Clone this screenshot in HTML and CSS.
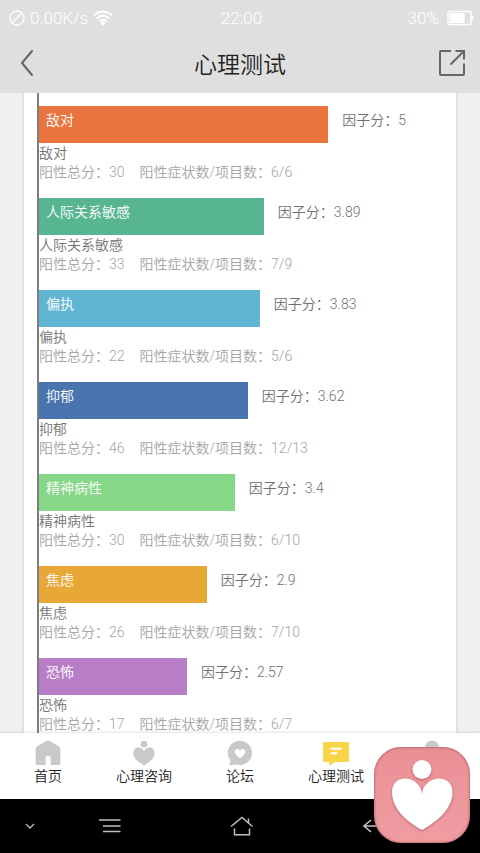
FILE: index.html
```html
<!DOCTYPE html>
<html lang="zh-CN">

<head>
  <meta charset="UTF-8">
  <meta name="viewport" content="width=device-width, initial-scale=1.0">
  <title>心理测试</title>
  <link rel="stylesheet" href="styles.css">
</head>

<body>
  <div class="status-bar">
    <div class="status-left">
      <svg width="16" height="16" viewBox="0 0 16 16" fill="none" stroke="#fff" stroke-width="1.3">
        <circle cx="8" cy="8" r="7" />
        <path d="M4 12L12 4" />
      </svg>
      <span>0.00K/s</span>
      <svg width="20" height="16" viewBox="0 0 20 16" fill="none" stroke="#fff" stroke-width="2">
        <path d="M1 5.2Q10 -2.2 19 5.2" />
        <path d="M3.7 8.4Q10 2.8 16.3 8.4" />
        <path d="M6.4 11.2Q10 8 13.6 11.2" />
        <circle cx="10" cy="13.4" r="2.1" fill="#fff" stroke="none" />
      </svg>
    </div>
    <div class="status-time">22:00</div>
    <div class="status-right">
      <span>30%</span>
      <svg width="27" height="16" viewBox="0 0 27 16">
        <rect x="1" y="1.5" width="23" height="13" rx="1" fill="none" stroke="#fff" stroke-width="1.4" />
        <rect x="2.5" y="3" width="15" height="10" fill="#fff" />
        <path d="M24.5 5.5h1.8v5h-1.8z" fill="#fff" />
      </svg>
    </div>
  </div>

  <header class="header">
    <button class="header-btn" aria-label="返回">
      <svg width="14" height="28" viewBox="0 0 14 28" fill="none" stroke="#666" stroke-width="2" stroke-linecap="round" stroke-linejoin="round">
        <path d="M12 2L2 14L12 26" />
      </svg>
    </button>
    <h1 class="header-title">心理测试</h1>
    <button class="header-btn header-share" aria-label="分享">
      <svg width="28" height="28" viewBox="0 0 28 28" fill="none" stroke="#666" stroke-width="2">
        <path d="M13 2H3Q2 2 2 3V25Q2 26 3 26H25Q26 26 26 25V14.5" />
        <path d="M17.5 2H26V10.5M26 2L12.5 15.5" />
      </svg>
    </button>
  </header>

  <main class="content">
    <section class="card">
      <div class="chart">
        <div class="factor">
          <div class="factor-row">
            <div class="bar bar-orange" style="width: 71.8%">敌对</div>
            <div class="score">因子分：5</div>
          </div>
          <div class="factor-name">敌对</div>
          <div class="factor-meta"><span>阳性总分：30</span><span>阳性症状数/项目数：6/6</span></div>
        </div>
        <div class="factor">
          <div class="factor-row">
            <div class="bar bar-teal" style="width: 55.8%">人际关系敏感</div>
            <div class="score">因子分：3.89</div>
          </div>
          <div class="factor-name">人际关系敏感</div>
          <div class="factor-meta"><span>阳性总分：33</span><span>阳性症状数/项目数：7/9</span></div>
        </div>
        <div class="factor">
          <div class="factor-row">
            <div class="bar bar-sky" style="width: 54.8%">偏执</div>
            <div class="score">因子分：3.83</div>
          </div>
          <div class="factor-name">偏执</div>
          <div class="factor-meta"><span>阳性总分：22</span><span>阳性症状数/项目数：5/6</span></div>
        </div>
        <div class="factor">
          <div class="factor-row">
            <div class="bar bar-blue" style="width: 51.8%">抑郁</div>
            <div class="score">因子分：3.62</div>
          </div>
          <div class="factor-name">抑郁</div>
          <div class="factor-meta"><span>阳性总分：46</span><span>阳性症状数/项目数：12/13</span></div>
        </div>
        <div class="factor">
          <div class="factor-row">
            <div class="bar bar-green" style="width: 48.6%">精神病性</div>
            <div class="score">因子分：3.4</div>
          </div>
          <div class="factor-name">精神病性</div>
          <div class="factor-meta"><span>阳性总分：30</span><span>阳性症状数/项目数：6/10</span></div>
        </div>
        <div class="factor">
          <div class="factor-row">
            <div class="bar bar-amber" style="width: 41.6%">焦虑</div>
            <div class="score">因子分：2.9</div>
          </div>
          <div class="factor-name">焦虑</div>
          <div class="factor-meta"><span>阳性总分：26</span><span>阳性症状数/项目数：7/10</span></div>
        </div>
        <div class="factor">
          <div class="factor-row">
            <div class="bar bar-purple" style="width: 36.7%">恐怖</div>
            <div class="score">因子分：2.57</div>
          </div>
          <div class="factor-name">恐怖</div>
          <div class="factor-meta"><span>阳性总分：17</span><span>阳性症状数/项目数：6/7</span></div>
        </div>
      </div>
    </section>
  </main>

  <nav class="tabs">
    <a class="tab" href="#home">
      <svg width="26" height="26" viewBox="0 0 26 26" fill="#c9c9c9">
        <path d="M11.6 .8Q13 0 14.4 .8L24 6.6Q25.3 7.4 25.3 9V23.5Q25.3 25 23.8 25H15.6V17Q15.6 16 14.6 16H11.6Q10.6 16 10.6 17V25H2.2Q.7 25 .7 23.5V9Q.7 7.4 2 6.6Z" />
      </svg>
      <span>首页</span>
    </a>
    <a class="tab" href="#consult">
      <svg width="26" height="26" viewBox="0 0 26 26" fill="#c9c9c9">
        <circle cx="13" cy="4.2" r="3.4" />
        <path d="M13 11.5C11.5 6.5 2.4 5.6 2.4 13.2C2.4 19 8.3 22.5 13 25.5C17.7 22.5 23.6 19 23.6 13.2C23.6 5.6 14.5 6.5 13 11.5Z" />
      </svg>
      <span>心理咨询</span>
    </a>
    <a class="tab" href="#forum">
      <svg width="26" height="26" viewBox="0 0 26 26">
        <path d="M13 .7A12.2 12.2 0 1 1 9 24.5L2 25.2L3.5 20.5A12.2 12.2 0 0 1 13 .7Z" fill="#c9c9c9" />
        <path d="M13 18.3C10 16 7.8 14.2 7.8 11.7C7.8 8.7 11.7 8.2 13 10.7C14.3 8.2 18.2 8.7 18.2 11.7C18.2 14.2 16 16 13 18.3Z" fill="#fff" />
      </svg>
      <span>论坛</span>
    </a>
    <a class="tab" href="#test">
      <svg width="26" height="26" viewBox="0 0 26 26">
        <path d="M1.7 2H24.3Q26 2 26 3.7V20.3Q26 22 24.3 22H12L7 25.4Q6.2 25.8 6.2 25V22H1.7Q0 22 0 20.3V3.7Q0 2 1.7 2Z" fill="#f8d648" />
        <path d="M8.5 8.7H17.8M8.5 13.2H13.5" stroke="#fff" stroke-width="2" stroke-linecap="round" />
      </svg>
      <span>心理测试</span>
    </a>
    <a class="tab" href="#mine" aria-label="我的">
      <svg width="26" height="26" viewBox="0 0 26 26" fill="#c9c9c9">
        <circle cx="13" cy="7.5" r="7" />
        <path d="M1 25Q2 16 13 16T25 25Z" />
      </svg>
    </a>
  </nav>

  <div class="system-nav">
    <button class="system-btn system-hide" aria-label="收起">
      <svg width="10" height="8" viewBox="0 0 10 8" fill="none" stroke="#c0c0c0" stroke-width="1.3">
        <path d="M1 2L5 6L9 2" />
      </svg>
    </button>
    <button class="system-btn" aria-label="菜单">
      <svg width="22" height="16" viewBox="0 0 22 16" fill="none" stroke="#c0c0c0" stroke-width="1.5">
        <path d="M0 2H21.5M4 8H21.5M4 13.5H21.5" />
      </svg>
    </button>
    <button class="system-btn" aria-label="主页">
      <svg width="24" height="20" viewBox="0 0 24 20" fill="none" stroke="#c0c0c0" stroke-width="1.5">
        <path d="M1 10.5L12 1.5L22.5 10.5M18.5 6.5V2.5M4.5 12.5V18.7H19.5V12.5" />
      </svg>
    </button>
    <button class="system-btn" aria-label="后退">
      <svg width="22" height="16" viewBox="0 0 22 16" fill="none" stroke="#c0c0c0" stroke-width="1.5">
        <path d="M8 2L1 8L8 14M1 8H21" />
      </svg>
    </button>
  </div>

  <button class="float-btn" aria-label="心理咨询">
    <svg width="96" height="96" viewBox="0 0 96 96">
      <g class="float-shape" fill="#fff">
        <circle cx="48" cy="22.5" r="9.5" />
        <path d="M48 47C47.5 38 39.5 31.5 31 31.5C23 31.5 18 37 18 45C18 62 33 75 48 83C63 75 78.5 62 78.5 45C78.5 37 73 31.5 65 31.5C56.5 31.5 48.5 38 48 47Z" />
      </g>
    </svg>
  </button>
</body>

</html>
```
FILE: styles.css
```css
* {
  margin: 0;
  padding: 0;
  box-sizing: border-box;
}

body {
  font-family: Roboto, "Noto Sans CJK SC", sans-serif;
  font-size: 14px;
  height: 100vh;
  display: flex;
  flex-direction: column;
  overflow: hidden;
  background: #f0f0f3;
}

svg {
  display: block;
}

button {
  background: none;
  border: none;
  font: inherit;
  cursor: pointer;
}

.status-bar {
  display: grid;
  grid-template-columns: 1fr auto 1fr;
  align-items: center;
  height: 36px;
  padding: 0 6px 0 9px;
  background: #dfdfdf;
  color: #fff;
  font-size: 17px;
  font-weight: 300;
}

.status-left,
.status-right {
  display: flex;
  align-items: center;
  gap: 5px;
}

.status-right {
  gap: 8px;
  justify-content: flex-end;
}

.header {
  display: flex;
  align-items: center;
  justify-content: space-between;
  height: 57px;
  padding: 0 14px 4px;
  background: #dfdfdf;
}

.header-btn {
  display: flex;
  align-items: center;
  width: 40px;
  height: 40px;
  padding-left: 6px;
}

.header-share {
  justify-content: flex-end;
  padding-left: 0;
}

.header-title {
  font-size: 23px;
  font-weight: 350;
  color: #222;
}

.content {
  flex: 1;
  min-height: 0;
  overflow: hidden;
  padding: 0 24px;
}

.card {
  padding: 0 14px 0 13px;
  background: #fff;
  box-shadow: 0 0 3px rgba(0, 0, 0, 0.2);
  font-weight: 350;
}

.chart {
  padding-top: 13px;
  border-left: 2px solid #7d7d7d;
}

.factor {
  margin-bottom: 17px;
}

.factor-row {
  display: flex;
  gap: 14px;
  height: 37px;
  line-height: 18px;
}

.bar {
  padding: 5px 7px;
  color: #fff;
}

.score {
  padding-top: 5px;
  color: #707070;
}

.bar-orange {
  background: #eb733e;
}

.bar-teal {
  background: #57b592;
}

.bar-sky {
  background: #60b5d3;
}

.bar-blue {
  background: #4a74ad;
}

.bar-green {
  background: #86d788;
}

.bar-amber {
  background: #e8a838;
}

.bar-purple {
  background: #b77dc7;
}

.factor-name {
  line-height: 20px;
  color: #747474;
}

.factor-meta {
  display: flex;
  gap: 15px;
  line-height: 18px;
  color: #a4a4a4;
}

.tabs {
  display: flex;
  height: 66px;
  background: #fff;
  box-shadow: 0 0 3px rgba(0, 0, 0, 0.2);
  position: relative;
  font-weight: 350;
}

.tab {
  flex: 1;
  display: flex;
  flex-direction: column;
  align-items: center;
  padding-top: 7px;
  line-height: 20px;
  color: #222;
  text-decoration: none;
}

.system-nav {
  display: grid;
  grid-template-columns: 44px 1fr 1fr 1fr 40px;
  height: 54px;
  background: #000;
}

.system-btn {
  display: flex;
  align-items: center;
  justify-content: center;
}

.system-hide {
  padding-left: 15px;
}

/* floating consult button, sits over the tab bar and system nav */
.float-btn {
  position: fixed;
  right: 10px;
  bottom: 10px;
  border-radius: 27px;
  background: linear-gradient(#e98f96, #f09da2);
  box-shadow: inset 0 0 3px rgba(120, 40, 50, 0.7);
}

.float-shape {
  filter: drop-shadow(0 1px 1px rgba(120, 40, 50, 0.5));
}
```
